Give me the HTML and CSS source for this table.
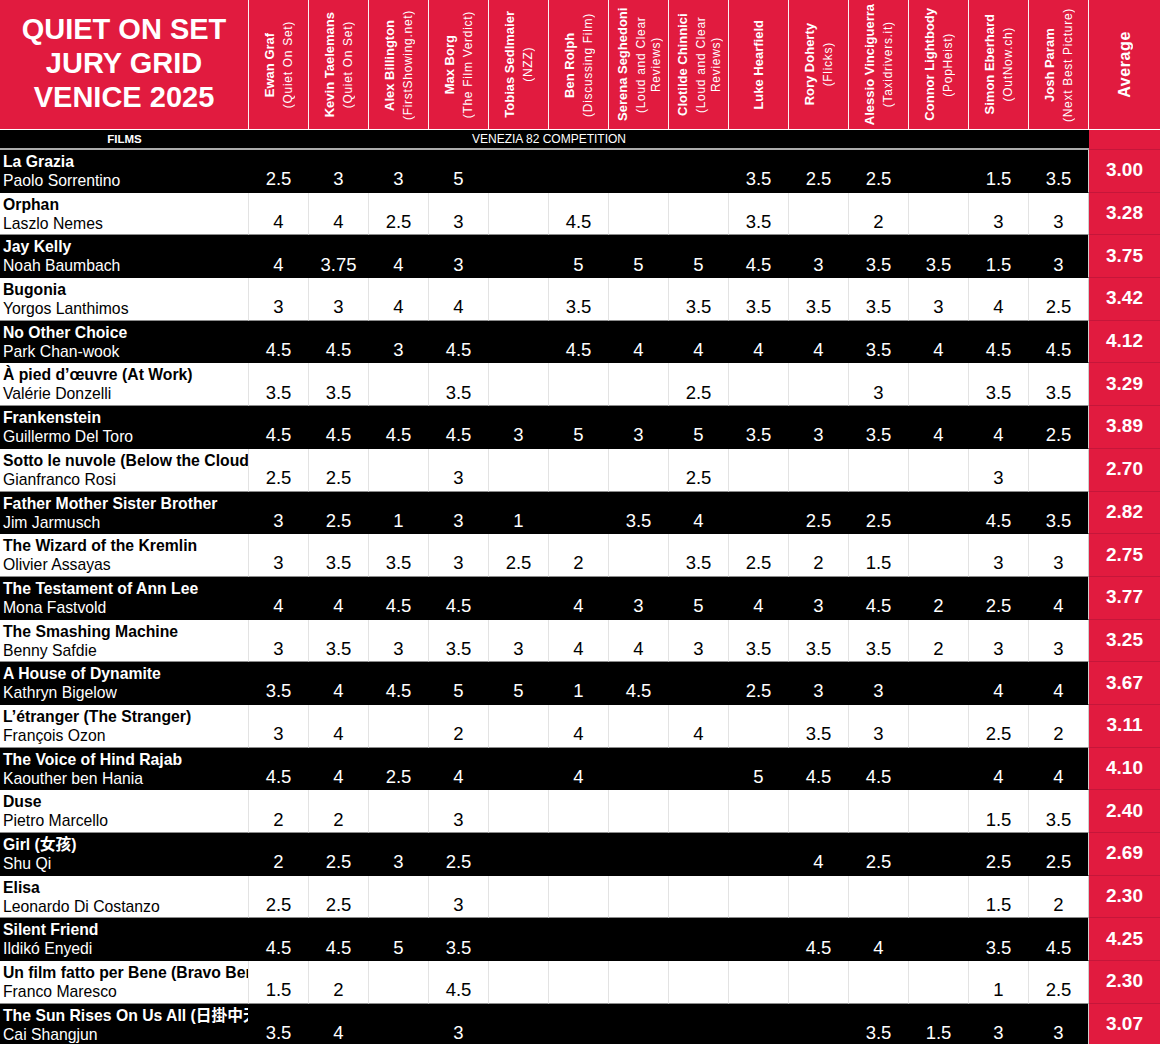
FILE: index.html
```html
<!DOCTYPE html>
<html lang="en">
<head>
<meta charset="utf-8">
<title>Quiet On Set Jury Grid Venice 2025</title>
<link rel="stylesheet" href="styles.css">
</head>
<body>
<div class="sheet">
  <div class="head">
    <div class="title">QUIET ON SET<br>JURY GRID<br>VENICE 2025</div>
    <div class="jh"><div class="v"><span class="n">Ewan Graf</span><span class="p">(Quiet On Set)</span></div></div>
    <div class="jh"><div class="v"><span class="n">Kevin Taelemans</span><span class="p">(Quiet On Set)</span></div></div>
    <div class="jh"><div class="v"><span class="n">Alex Billington</span><span class="p">(FirstShowing.net)</span></div></div>
    <div class="jh"><div class="v"><span class="n">Max Borg</span><span class="p">(The Film Verdict)</span></div></div>
    <div class="jh"><div class="v"><span class="n">Tobias Sedlmaier</span><span class="p">(NZZ)</span></div></div>
    <div class="jh"><div class="v"><span class="n">Ben Rolph</span><span class="p">(Discussing Film)</span></div></div>
    <div class="jh"><div class="v"><span class="n">Serena Seghedoni</span><span class="p">(Loud and Clear Reviews)</span></div></div>
    <div class="jh"><div class="v"><span class="n">Clotilde Chinnici</span><span class="p">(Loud and Clear Reviews)</span></div></div>
    <div class="jh"><div class="v"><span class="n">Luke Hearfield</span></div></div>
    <div class="jh"><div class="v"><span class="n">Rory Doherty</span><span class="p">(Flicks)</span></div></div>
    <div class="jh"><div class="v"><span class="n">Alessio Vinciguerra</span><span class="p">(Taxidrivers.it)</span></div></div>
    <div class="jh"><div class="v"><span class="n">Connor Lightbody</span><span class="p">(PopHeist)</span></div></div>
    <div class="jh"><div class="v"><span class="n">Simon Eberhard</span><span class="p">(OutNow.ch)</span></div></div>
    <div class="jh"><div class="v"><span class="n">Josh Param</span><span class="p">(Next Best Picture)</span></div></div>
    <div class="jh avgh"><div class="v">Average</div></div>
  </div>

  <div class="sub">
    <div class="films">FILMS</div>
    <div class="comp">VENEZIA 82 COMPETITION</div>
    <div class="rest"></div>
    <div class="avgc"></div>
  </div>

  <div class="row dark">
    <div class="film"><span class="t">La Grazia</span><span class="d">Paolo Sorrentino</span></div>
    <div class="s">2.5</div><div class="s">3</div><div class="s">3</div><div class="s">5</div><div class="s"></div><div class="s"></div><div class="s"></div><div class="s"></div><div class="s">3.5</div><div class="s">2.5</div><div class="s">2.5</div><div class="s"></div><div class="s">1.5</div><div class="s">3.5</div>
    <div class="avg">3.00</div>
  </div>
  <div class="row light">
    <div class="film"><span class="t">Orphan</span><span class="d">Laszlo Nemes</span></div>
    <div class="s">4</div><div class="s">4</div><div class="s">2.5</div><div class="s">3</div><div class="s"></div><div class="s">4.5</div><div class="s"></div><div class="s"></div><div class="s">3.5</div><div class="s"></div><div class="s">2</div><div class="s"></div><div class="s">3</div><div class="s">3</div>
    <div class="avg">3.28</div>
  </div>
  <div class="row dark">
    <div class="film"><span class="t">Jay Kelly</span><span class="d">Noah Baumbach</span></div>
    <div class="s">4</div><div class="s">3.75</div><div class="s">4</div><div class="s">3</div><div class="s"></div><div class="s">5</div><div class="s">5</div><div class="s">5</div><div class="s">4.5</div><div class="s">3</div><div class="s">3.5</div><div class="s">3.5</div><div class="s">1.5</div><div class="s">3</div>
    <div class="avg">3.75</div>
  </div>
  <div class="row light">
    <div class="film"><span class="t">Bugonia</span><span class="d">Yorgos Lanthimos</span></div>
    <div class="s">3</div><div class="s">3</div><div class="s">4</div><div class="s">4</div><div class="s"></div><div class="s">3.5</div><div class="s"></div><div class="s">3.5</div><div class="s">3.5</div><div class="s">3.5</div><div class="s">3.5</div><div class="s">3</div><div class="s">4</div><div class="s">2.5</div>
    <div class="avg">3.42</div>
  </div>
  <div class="row dark">
    <div class="film"><span class="t">No Other Choice</span><span class="d">Park Chan-wook</span></div>
    <div class="s">4.5</div><div class="s">4.5</div><div class="s">3</div><div class="s">4.5</div><div class="s"></div><div class="s">4.5</div><div class="s">4</div><div class="s">4</div><div class="s">4</div><div class="s">4</div><div class="s">3.5</div><div class="s">4</div><div class="s">4.5</div><div class="s">4.5</div>
    <div class="avg">4.12</div>
  </div>
  <div class="row light">
    <div class="film"><span class="t">À pied d’œuvre (At Work)</span><span class="d">Valérie Donzelli</span></div>
    <div class="s">3.5</div><div class="s">3.5</div><div class="s"></div><div class="s">3.5</div><div class="s"></div><div class="s"></div><div class="s"></div><div class="s">2.5</div><div class="s"></div><div class="s"></div><div class="s">3</div><div class="s"></div><div class="s">3.5</div><div class="s">3.5</div>
    <div class="avg">3.29</div>
  </div>
  <div class="row dark">
    <div class="film"><span class="t">Frankenstein</span><span class="d">Guillermo Del Toro</span></div>
    <div class="s">4.5</div><div class="s">4.5</div><div class="s">4.5</div><div class="s">4.5</div><div class="s">3</div><div class="s">5</div><div class="s">3</div><div class="s">5</div><div class="s">3.5</div><div class="s">3</div><div class="s">3.5</div><div class="s">4</div><div class="s">4</div><div class="s">2.5</div>
    <div class="avg">3.89</div>
  </div>
  <div class="row light">
    <div class="film"><span class="t">Sotto le nuvole (Below the Clouds)</span><span class="d">Gianfranco Rosi</span></div>
    <div class="s">2.5</div><div class="s">2.5</div><div class="s"></div><div class="s">3</div><div class="s"></div><div class="s"></div><div class="s"></div><div class="s">2.5</div><div class="s"></div><div class="s"></div><div class="s"></div><div class="s"></div><div class="s">3</div><div class="s"></div>
    <div class="avg">2.70</div>
  </div>
  <div class="row dark">
    <div class="film"><span class="t">Father Mother Sister Brother</span><span class="d">Jim Jarmusch</span></div>
    <div class="s">3</div><div class="s">2.5</div><div class="s">1</div><div class="s">3</div><div class="s">1</div><div class="s"></div><div class="s">3.5</div><div class="s">4</div><div class="s"></div><div class="s">2.5</div><div class="s">2.5</div><div class="s"></div><div class="s">4.5</div><div class="s">3.5</div>
    <div class="avg">2.82</div>
  </div>
  <div class="row light">
    <div class="film"><span class="t">The Wizard of the Kremlin</span><span class="d">Olivier Assayas</span></div>
    <div class="s">3</div><div class="s">3.5</div><div class="s">3.5</div><div class="s">3</div><div class="s">2.5</div><div class="s">2</div><div class="s"></div><div class="s">3.5</div><div class="s">2.5</div><div class="s">2</div><div class="s">1.5</div><div class="s"></div><div class="s">3</div><div class="s">3</div>
    <div class="avg">2.75</div>
  </div>
  <div class="row dark">
    <div class="film"><span class="t">The Testament of Ann Lee</span><span class="d">Mona Fastvold</span></div>
    <div class="s">4</div><div class="s">4</div><div class="s">4.5</div><div class="s">4.5</div><div class="s"></div><div class="s">4</div><div class="s">3</div><div class="s">5</div><div class="s">4</div><div class="s">3</div><div class="s">4.5</div><div class="s">2</div><div class="s">2.5</div><div class="s">4</div>
    <div class="avg">3.77</div>
  </div>
  <div class="row light">
    <div class="film"><span class="t">The Smashing Machine</span><span class="d">Benny Safdie</span></div>
    <div class="s">3</div><div class="s">3.5</div><div class="s">3</div><div class="s">3.5</div><div class="s">3</div><div class="s">4</div><div class="s">4</div><div class="s">3</div><div class="s">3.5</div><div class="s">3.5</div><div class="s">3.5</div><div class="s">2</div><div class="s">3</div><div class="s">3</div>
    <div class="avg">3.25</div>
  </div>
  <div class="row dark">
    <div class="film"><span class="t">A House of Dynamite</span><span class="d">Kathryn Bigelow</span></div>
    <div class="s">3.5</div><div class="s">4</div><div class="s">4.5</div><div class="s">5</div><div class="s">5</div><div class="s">1</div><div class="s">4.5</div><div class="s"></div><div class="s">2.5</div><div class="s">3</div><div class="s">3</div><div class="s"></div><div class="s">4</div><div class="s">4</div>
    <div class="avg">3.67</div>
  </div>
  <div class="row light">
    <div class="film"><span class="t">L’étranger (The Stranger)</span><span class="d">François Ozon</span></div>
    <div class="s">3</div><div class="s">4</div><div class="s"></div><div class="s">2</div><div class="s"></div><div class="s">4</div><div class="s"></div><div class="s">4</div><div class="s"></div><div class="s">3.5</div><div class="s">3</div><div class="s"></div><div class="s">2.5</div><div class="s">2</div>
    <div class="avg">3.11</div>
  </div>
  <div class="row dark">
    <div class="film"><span class="t">The Voice of Hind Rajab</span><span class="d">Kaouther ben Hania</span></div>
    <div class="s">4.5</div><div class="s">4</div><div class="s">2.5</div><div class="s">4</div><div class="s"></div><div class="s">4</div><div class="s"></div><div class="s"></div><div class="s">5</div><div class="s">4.5</div><div class="s">4.5</div><div class="s"></div><div class="s">4</div><div class="s">4</div>
    <div class="avg">4.10</div>
  </div>
  <div class="row light">
    <div class="film"><span class="t">Duse</span><span class="d">Pietro Marcello</span></div>
    <div class="s">2</div><div class="s">2</div><div class="s"></div><div class="s">3</div><div class="s"></div><div class="s"></div><div class="s"></div><div class="s"></div><div class="s"></div><div class="s"></div><div class="s"></div><div class="s"></div><div class="s">1.5</div><div class="s">3.5</div>
    <div class="avg">2.40</div>
  </div>
  <div class="row dark">
    <div class="film"><span class="t">Girl (女孩)</span><span class="d">Shu Qi</span></div>
    <div class="s">2</div><div class="s">2.5</div><div class="s">3</div><div class="s">2.5</div><div class="s"></div><div class="s"></div><div class="s"></div><div class="s"></div><div class="s"></div><div class="s">4</div><div class="s">2.5</div><div class="s"></div><div class="s">2.5</div><div class="s">2.5</div>
    <div class="avg">2.69</div>
  </div>
  <div class="row light">
    <div class="film"><span class="t">Elisa</span><span class="d">Leonardo Di Costanzo</span></div>
    <div class="s">2.5</div><div class="s">2.5</div><div class="s"></div><div class="s">3</div><div class="s"></div><div class="s"></div><div class="s"></div><div class="s"></div><div class="s"></div><div class="s"></div><div class="s"></div><div class="s"></div><div class="s">1.5</div><div class="s">2</div>
    <div class="avg">2.30</div>
  </div>
  <div class="row dark">
    <div class="film"><span class="t">Silent Friend</span><span class="d">Ildikó Enyedi</span></div>
    <div class="s">4.5</div><div class="s">4.5</div><div class="s">5</div><div class="s">3.5</div><div class="s"></div><div class="s"></div><div class="s"></div><div class="s"></div><div class="s"></div><div class="s">4.5</div><div class="s">4</div><div class="s"></div><div class="s">3.5</div><div class="s">4.5</div>
    <div class="avg">4.25</div>
  </div>
  <div class="row light">
    <div class="film"><span class="t">Un film fatto per Bene (Bravo Bene)</span><span class="d">Franco Maresco</span></div>
    <div class="s">1.5</div><div class="s">2</div><div class="s"></div><div class="s">4.5</div><div class="s"></div><div class="s"></div><div class="s"></div><div class="s"></div><div class="s"></div><div class="s"></div><div class="s"></div><div class="s"></div><div class="s">1</div><div class="s">2.5</div>
    <div class="avg">2.30</div>
  </div>
  <div class="row dark">
    <div class="film"><span class="t">The Sun Rises On Us All (日掛中天)</span><span class="d">Cai Shangjun</span></div>
    <div class="s">3.5</div><div class="s">4</div><div class="s"></div><div class="s">3</div><div class="s"></div><div class="s"></div><div class="s"></div><div class="s"></div><div class="s"></div><div class="s"></div><div class="s">3.5</div><div class="s">1.5</div><div class="s">3</div><div class="s">3</div>
    <div class="avg">3.07</div>
  </div>
</div>
</body>
</html>
```

FILE: styles.css
```css
* {
  box-sizing: border-box;
}

body {
  margin: 0;
  background: #fff;
  font-family: "Liberation Sans", Arial, "Noto Sans CJK SC", sans-serif;
}

.sheet {
  width: 1160px;
}

.head,
.sub,
.row {
  display: grid;
  grid-template-columns: 249px repeat(14, 60px) 71px;
}

/* ---------- header ---------- */
.head {
  height: 130px;
}

.head > div {
  background: #e11b3f;
  color: #fff;
  border-right: 1px solid #fbeef0;
  border-bottom: 1px solid #fff;
  display: flex;
  align-items: center;
  justify-content: center;
}

.head > div:last-child {
  border-right: 0;
}

.title {
  font-size: 29px;
  font-weight: bold;
  line-height: 34px;
  text-align: center;
  padding-bottom: 3px;
}

.v {
  writing-mode: vertical-rl;
  transform: rotate(180deg);
  text-align: center;
  max-height: 127px;
}

.n {
  display: block;
  font-weight: bold;
  font-size: 13px;
  line-height: 18px;
}

.p {
  display: block;
  font-size: 12px;
  line-height: 15px;
  letter-spacing: 0.7px;
  margin-block-start: 2px;
}

.avgh .v {
  font-size: 16px;
  font-weight: bold;
  letter-spacing: 0.6px;
}

/* ---------- competition bar ---------- */
.sub {
  height: 20px;
}

.sub > div {
  background: #000;
  color: #fff;
  font-size: 12px;
  line-height: 18px;
  text-align: center;
  border-bottom: 2px solid #ababab;
}

.sub .films {
  font-weight: bold;
  font-size: 11.5px;
}

.sub .comp {
  grid-column: span 10;
}

.sub .rest {
  grid-column: span 4;
}

.sub .avgc {
  background: #e11b3f;
  border-bottom: 1px solid #c5163a;
}

/* ---------- rows ---------- */
.row {
  height: 42.7px;
}

.row > div {
  border-right: 1px solid;
  border-bottom: 1px solid;
}

.dark > div {
  background: #000;
  color: #fff;
  border-color: #000;
}

.light > div {
  background: #fff;
  color: #000;
  border-right-color: #e3e3e3;
  border-bottom-color: #8c8c8c;
}

.row > .s:nth-child(15) {
  border-right-color: #cfcfcf;
}

.film {
  padding: 2px 0 0 3px;
  white-space: nowrap;
  overflow: hidden;
}

.t {
  display: block;
  font-weight: bold;
  font-size: 15.75px;
  line-height: 19px;
}

.d {
  display: block;
  font-size: 15.75px;
  line-height: 20px;
}

.s {
  display: flex;
  align-items: flex-end;
  justify-content: center;
  font-size: 18.5px;
  line-height: 22px;
  padding-bottom: 1.5px;
}

.row > .avg {
  background: #e11b3f;
  color: #fff;
  border-right: 0;
  border-bottom-color: #c5163a;
  font-weight: bold;
  font-size: 19px;
  display: flex;
  align-items: center;
  justify-content: center;
  padding-bottom: 1px;
}
```
